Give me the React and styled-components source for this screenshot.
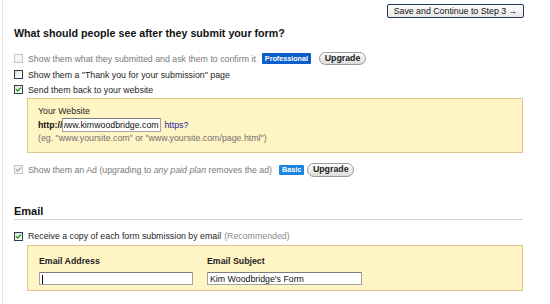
import React from "react";
import styled, { createGlobalStyle } from "styled-components";

const GlobalStyle = createGlobalStyle`
  html, body {
    margin: 0;
    padding: 0;
    background: #ffffff;
  }
  body {
    font-family: "Liberation Sans", Arial, sans-serif;
    font-size: 8.8px;
    color: #1e1e1e;
  }
`;

const Page = styled.div`
  width: 536px;
  height: 304px;
  margin-left: 2px;
  border-left: 1px solid #e2e2e2;
  padding-left: 11px;
  box-sizing: border-box;
  display: flex;
  flex-direction: column;
`;

const Content = styled.div`
  width: 509px;
  display: flex;
  flex-direction: column;
`;

const TopBar = styled.div`
  display: flex;
  justify-content: flex-end;
  padding-top: 4px;
`;

const SaveButton = styled.button`
  height: 14px;
  width: 137px;
  margin-right: -1px;
  padding: 0;
  border: 1px solid #23355e;
  border-radius: 2px;
  background: linear-gradient(#ffffff, #e6e6e6);
  font-family: inherit;
  font-size: 8.8px;
  line-height: 12px;
  color: #111;
  cursor: pointer;
`;

const Heading = styled.h2`
  margin: 9px 0 0;
  font-size: 10.7px;
  line-height: 13px;
  font-weight: bold;
  color: #111;
`;

const Options = styled.div`
  display: flex;
  flex-direction: column;
  margin-top: 10px;
`;

const Row = styled.label`
  display: flex;
  align-items: center;
  height: ${(p) => p.$h || 15}px;
  color: ${(p) => (p.$muted ? "#7a7a7a" : "#1e1e1e")};
  white-space: nowrap;
`;

const Box = styled.span`
  width: 9px;
  height: 9px;
  box-sizing: border-box;
  margin-right: 5px;
  border: 1px solid ${(p) => (p.$disabled ? "#c4c4c4" : "#2a3f5a")};
  background: ${(p) =>
    p.$disabled ? "#f6f6f6" : "linear-gradient(135deg, #e2e2da, #ffffff)"};
  flex-shrink: 0;
  display: flex;
  align-items: center;
  justify-content: center;
`;

const Checkbox = ({ checked, disabled }) => (
  <Box $disabled={disabled}>
    {checked && (
      <svg width="7" height="7" viewBox="0 0 7 7">
        <path
          d="M1 3.3 L2.7 5 L6 1.6"
          fill="none"
          stroke={disabled ? "#a8a8a8" : "#21a121"}
          strokeWidth="1.4"
        />
      </svg>
    )}
  </Box>
);

const Badge = styled.span`
  display: inline-flex;
  align-items: center;
  height: ${(p) => (p.$basic ? 10 : 11)}px;
  padding: 0 3px;
  margin-left: ${(p) => p.$ml}px;
  background: ${(p) => (p.$basic ? "#1b86e2" : "#0c5fcb")};
  color: #fff;
  font-size: 7.2px;
  font-weight: bold;
  border-radius: 1px;
`;

const Upgrade = styled.button`
  height: ${(p) => p.$h}px;
  width: 47px;
  margin-left: ${(p) => p.$ml}px;
  padding: 0;
  border: 1px solid #9a9a9a;
  border-radius: 7px;
  background: linear-gradient(#ffffff, #dcdcdc);
  font-family: inherit;
  font-size: 8.8px;
  font-weight: bold;
  color: #222;
  line-height: 11px;
`;

const YellowBox = styled.div`
  margin-left: 13px;
  width: 496px;
  box-sizing: border-box;
  border: 1px solid #e0c48e;
  background: #fff4c4;
  padding: ${(p) => p.$pad};
  display: flex;
  flex-direction: ${(p) => (p.$row ? "row" : "column")};
  gap: ${(p) => p.$gap || 0}px;
`;

const Label = styled.div`
  line-height: 13px;
  font-weight: ${(p) => (p.$bold ? "bold" : "normal")};
  color: #1e1e1e;
`;

const UrlRow = styled.div`
  display: flex;
  align-items: center;
  height: 14px;
  font-weight: bold;
  color: #111;
`;

const TextInput = styled.input`
  width: ${(p) => p.$w}px;
  height: ${(p) => p.$h}px;
  box-sizing: border-box;
  margin: 0;
  padding: 0 ${(p) => (p.$indent ? 1 : 2)}px;
  border: 1px solid #a4a4a4;
  border-top-color: #7c7c7c;
  background: #fff;
  font-family: inherit;
  font-size: 8.8px;
  color: #111;
  outline: none;
  text-indent: ${(p) => p.$indent || 0}px;
`;

const Link = styled.a`
  margin-left: 3px;
  color: #1a1aa8;
  font-weight: normal;
  text-decoration: none;
`;

const Hint = styled.div`
  line-height: 13px;
  color: #707070;
`;

const Gap = styled.div`
  height: ${(p) => p.$h}px;
`;

const SectionTitle = styled.h2`
  margin: 27px 0 0;
  font-size: 11px;
  line-height: 14px;
  font-weight: bold;
  color: #111;
  padding-bottom: 1px;
  border-bottom: 1px solid #d2d2d2;
`;

const Note = styled.span`
  margin-left: 3px;
  color: #8a8a8a;
`;

const Field = styled.div`
  display: flex;
  flex-direction: column;
  gap: 4px;
`;

const InputWrap = styled.div`
  position: relative;
  display: flex;
`;

const Caret = styled.span`
  position: absolute;
  left: 3px;
  top: 3px;
  width: 1px;
  height: 9px;
  background: #000;
`;

export default function App() {
  return (
    <>
      <GlobalStyle />
      <Page>
        <Content>
          <TopBar>
            <SaveButton>Save and Continue to Step 3 →</SaveButton>
          </TopBar>
          <Heading>What should people see after they submit your form?</Heading>
          <Options>
            <Row $h={17} $muted>
              <Checkbox disabled />
              Show them what they submitted and ask them to confirm it
              <Badge $ml={6}>Professional</Badge>
              <Upgrade $h={13} $ml={8}>Upgrade</Upgrade>
            </Row>
            <Row>
              <Checkbox />
              Show them a "Thank you for your submission" page
            </Row>
            <Row>
              <Checkbox checked />
              Send them back to your website
            </Row>
          </Options>
          <Gap $h={1} />
          <YellowBox $pad="6px 10px 7px">
            <Label>Your Website</Label>
            <UrlRow>
              http://
              <TextInput
                $w={99}
                $h={14}
                $indent={-5}
                readOnly
                value="www.kimwoodbridge.com"
              />
              <Link href="#">https?</Link>
            </UrlRow>
            <Hint>(eg. "www.yoursite.com" or "www.yoursite.com/page.html")</Hint>
          </YellowBox>
          <Gap $h={9} />
          <Row $h={15} $muted>
            <Checkbox checked disabled />
            Show them an Ad (upgrading to&nbsp;<i>any paid plan</i>&nbsp;removes the ad)
            <Badge $basic $ml={7}>Basic</Badge>
            <Upgrade $h={14} $ml={3}>Upgrade</Upgrade>
          </Row>
          <SectionTitle>Email</SectionTitle>
          <Gap $h={9} />
          <Row $h={14}>
            <Checkbox checked />
            Receive a copy of each form submission by email
            <Note>(Recommended)</Note>
          </Row>
          <Gap $h={2} />
          <YellowBox $row $gap={14} $pad="9px 11px 5px">
            <Field>
              <Label $bold>Email Address</Label>
              <InputWrap>
                <TextInput $w={154} $h={13} readOnly value="" />
                <Caret />
              </InputWrap>
            </Field>
            <Field>
              <Label $bold>Email Subject</Label>
              <TextInput $w={155} $h={13} readOnly value="Kim Woodbridge's Form" />
            </Field>
          </YellowBox>
        </Content>
      </Page>
    </>
  );
}
